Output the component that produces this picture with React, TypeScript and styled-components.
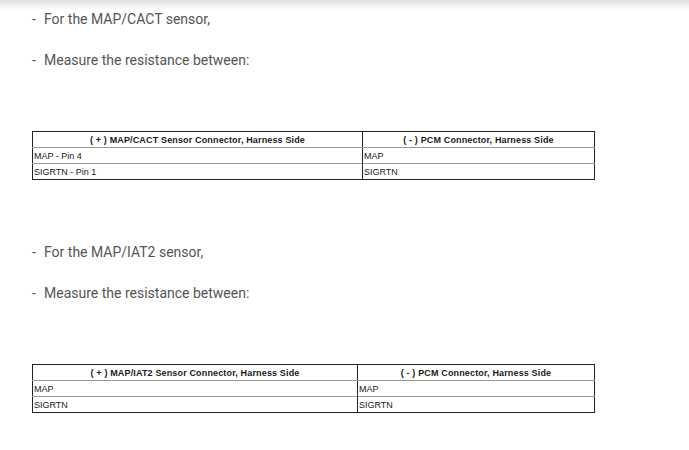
import React from "react";
import styled, { createGlobalStyle } from "styled-components";

const Global = createGlobalStyle`
  html, body { margin: 0; padding: 0; background: #fff; }
  body { font-family: Roboto, "Liberation Sans", Arial, sans-serif; }
`;

const TopShade = styled.div`
  position: fixed;
  top: 0;
  left: 0;
  right: 0;
  height: 10px;
  background: linear-gradient(to bottom, rgba(0,0,0,0.12), rgba(0,0,0,0));
  pointer-events: none;
`;

const Page = styled.div`
  padding: 9px 0 40px 32px;
`;

const Section = styled.section`
  & + & { margin-top: 62px; }
`;

const Bullet = styled.div`
  display: flex;
  gap: 7px;
  font-size: 14px;
  line-height: 20px;
  color: #555;
  & + & { margin-top: 21px; }
`;

const Dash = styled.span`
  width: 5px;
`;

const TABLE_W = 562;

const Table = styled.table`
  margin-top: 61px;
  width: ${TABLE_W}px;
  border-collapse: collapse;
  border: 1px solid #222;
  font-family: "Liberation Sans", Arial, sans-serif;
  table-layout: fixed;
`;

const Col = styled.col<{ $w: number }>`
  width: ${(p) => p.$w}px;
`;

const Th = styled.th`
  height: 15px;
  padding: 0;
  font-size: 9px;
  letter-spacing: 0.15px;
  font-weight: bold;
  color: #1a1a1a;
  text-align: center;
  border-left: 1px solid #222;
  border-bottom: 1px solid #999;
  &:first-child { border-left: none; }
`;

const Td = styled.td`
  height: 15px;
  padding: 0 0 0 1px;
  font-size: 9px;
  color: #1a1a1a;
  text-align: left;
  border-left: 1px solid #222;
  border-top: 1px solid #999;
  &:first-child { border-left: none; }
`;

type Data = {
  sensor: string;
  pcm: string;
  leftW: number;
  rows: [string, string][];
};

const sections: Data[] = [
  {
    sensor: "MAP/CACT",
    pcm: "( - ) PCM Connector, Harness Side",
    leftW: 330,
    rows: [
      ["MAP - Pin 4", "MAP"],
      ["SIGRTN - Pin 1", "SIGRTN"],
    ],
  },
  {
    sensor: "MAP/IAT2",
    pcm: "( - ) PCM Connector, Harness Side",
    leftW: 325,
    rows: [
      ["MAP", "MAP"],
      ["SIGRTN", "SIGRTN"],
    ],
  },
];

export default function App() {
  return (
    <>
      <Global />
      <TopShade />
      <Page>
        {sections.map((s) => (
          <Section key={s.sensor}>
            <Bullet>
              <Dash>-</Dash>
              <span>For the {s.sensor} sensor,</span>
            </Bullet>
            <Bullet>
              <Dash>-</Dash>
              <span>Measure the resistance between:</span>
            </Bullet>
            <Table>
              <colgroup>
                <Col $w={s.leftW} />
                <Col $w={TABLE_W - s.leftW} />
              </colgroup>
              <thead>
                <tr>
                  <Th>( + ) {s.sensor} Sensor Connector, Harness Side</Th>
                  <Th>{s.pcm}</Th>
                </tr>
              </thead>
              <tbody>
                {s.rows.map((r) => (
                  <tr key={r[0]}>
                    <Td>{r[0]}</Td>
                    <Td>{r[1]}</Td>
                  </tr>
                ))}
              </tbody>
            </Table>
          </Section>
        ))}
      </Page>
    </>
  );
}
